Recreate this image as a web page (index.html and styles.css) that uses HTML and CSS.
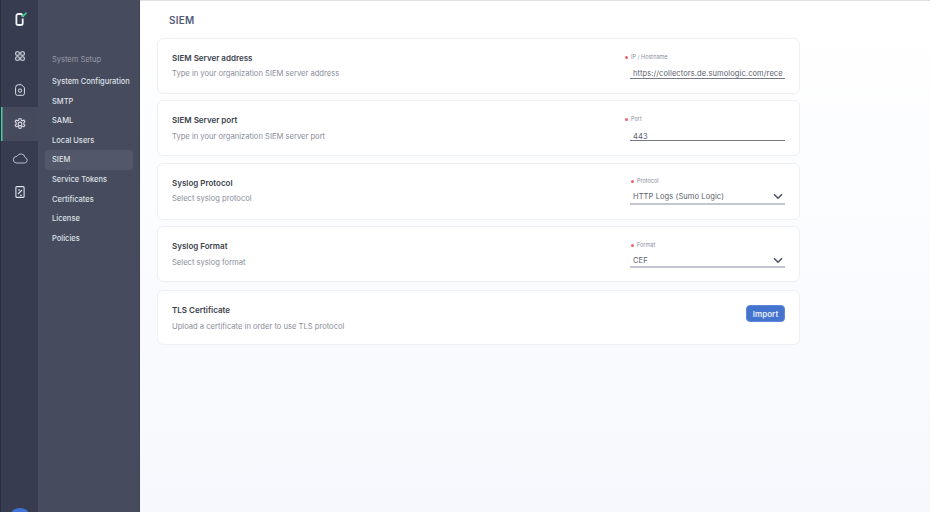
FILE: index.html
```html
<!DOCTYPE html>
<html lang="en">
<head>
<meta charset="utf-8">
<title>SIEM</title>
<link rel="stylesheet" href="styles.css">
</head>
<body>
<div class="app">
  <nav class="rail">
    <div class="rail-logo">
      <svg width="16" height="15" viewBox="0 0 16 15" fill="none"><path d="M10.700 4.800V3.800A1.800 1.800 0 0 0 8.900 2H6.200a1.800 1.800 0 0 0-1.800 1.800v7.400A1.800 1.800 0 0 0 6.200 13h2.700a1.800 1.800 0 0 0 1.800-1.800V6.500" stroke="#f2f3f6" stroke-width="1.800"/><path d="M9.900 2.800l1.400 1.400 3.200-3.600" stroke="#3fcf8e" stroke-width="1.600"/></svg>
    </div>
    <div class="rail-item">
      <svg width="10" height="10" viewBox="0 0 10 10" fill="none" stroke="#dfe1e8" stroke-width="1.100"><rect x=".7" y=".7" width="3.600" height="3.600" rx="1.400"/><rect x="5.700" y=".7" width="3.600" height="3.600" rx="1.400"/><rect x=".7" y="5.700" width="3.600" height="3.600" rx="1.400"/><rect x="5.700" y="5.700" width="3.600" height="3.600" rx="1.400"/></svg>
    </div>
    <div class="rail-item">
      <svg width="10" height="12" viewBox="0 0 10 12" fill="none" stroke="#dfe1e8" stroke-width="1"><path d="M3.500.7h2.900l3 3V9.500a1.800 1.800 0 0 1-1.800 1.800H2.400A1.800 1.800 0 0 1 .6 9.500V3.600A2.900 2.900 0 0 1 3.500.7z"/><circle cx="5" cy="6.600" r="1.700"/></svg>
    </div>
    <div class="rail-item rail-item-active">
      <svg width="12" height="12" viewBox="0 0 14 14" fill="none" stroke="#dfe1e8" stroke-width="1.200"><path d="M5.800 1h2.400l.4 1.700 1.400.6 1.500-.9 1.200 2-1.300 1.200v1.600l1.300 1.200-1.200 2-1.500-.9-1.400.6-.4 1.900H5.800l-.4-1.900-1.400-.6-1.500.9-1.200-2 1.300-1.200V5.600L1.300 4.400l1.200-2 1.500.9 1.400-.6z"/><circle cx="7" cy="7" r="2.200"/></svg>
    </div>
    <div class="rail-item">
      <svg width="16" height="11" viewBox="0 0 16 11" fill="none" stroke="#b9bcc9" stroke-width="1"><path d="M4 10h8.500a2.800 2.800 0 0 0 .6-5.500A4.300 4.300 0 0 0 5 3.300 3.400 3.400 0 0 0 4 10z"/></svg>
    </div>
    <div class="rail-item">
      <svg width="10" height="12" viewBox="0 0 10 12" fill="none" stroke="#e3e5eb" stroke-width="1.100"><rect x=".9" y=".6" width="8.200" height="10.800" rx="1"/><path d="M3 8l4-4M3 4h2M5 9.200h2"/></svg>
    </div>
    <div class="avatar"></div>
  </nav>
  <aside class="side">
    <div class="side-title">System Setup</div>
    <a class="side-link">System Configuration</a>
    <a class="side-link">SMTP</a>
    <a class="side-link">SAML</a>
    <a class="side-link">Local Users</a>
    <a class="side-link side-link-active">SIEM</a>
    <a class="side-link">Service Tokens</a>
    <a class="side-link">Certificates</a>
    <a class="side-link">License</a>
    <a class="side-link">Policies</a>
  </aside>
  <main class="main">
    <h1 class="page-title">SIEM</h1>
    <section class="card card-address">
      <div class="info"><h2>SIEM Server address</h2><p>Type in your organization SIEM server address</p></div>
      <div class="field">
        <div class="label"><i></i>IP / Hostname</div>
        <div class="value"><span>https://collectors.de.sumologic.com/rece</span></div>
      </div>
    </section>
    <section class="card card-port">
      <div class="info"><h2>SIEM Server port</h2><p>Type in your organization SIEM server port</p></div>
      <div class="field">
        <div class="label"><i></i>Port</div>
        <div class="value"><span>443</span></div>
      </div>
    </section>
    <section class="card card-protocol">
      <div class="info"><h2>Syslog Protocol</h2><p>Select syslog protocol</p></div>
      <div class="field">
        <div class="label label-select"><i></i>Protocol</div>
        <div class="value value-select"><span>HTTP Logs (Sumo Logic)</span><svg width="10" height="7" viewBox="0 0 10 7" fill="none" stroke="#4a4f60" stroke-width="1.500"><path d="M1 1.200l4 4 4-4"/></svg></div>
      </div>
    </section>
    <section class="card card-format">
      <div class="info"><h2>Syslog Format</h2><p>Select syslog format</p></div>
      <div class="field">
        <div class="label label-select"><i></i>Format</div>
        <div class="value value-select"><span>CEF</span><svg width="10" height="7" viewBox="0 0 10 7" fill="none" stroke="#4a4f60" stroke-width="1.500"><path d="M1 1.200l4 4 4-4"/></svg></div>
      </div>
    </section>
    <section class="card card-tls">
      <div class="info"><h2>TLS Certificate</h2><p>Upload a certificate in order to use TLS protocol</p></div>
      <button class="import">Import</button>
    </section>
  </main>
</div>
</body>
</html>
```
FILE: styles.css
```css
* { box-sizing: border-box; }
html, body { margin: 0; height: 100%; }
body { font-family: Inter, "Liberation Sans", sans-serif; background: #fff; overflow: hidden; }
.app { display: flex; width: 930px; height: 512px; }

.rail {
  width: 38px; flex: none; display: flex; flex-direction: column; align-items: stretch;
  background: #383c51; border-left: 1px solid #2b2e3d; overflow: hidden;
}
.rail-logo { height: 39px; display: flex; align-items: center; justify-content: center; }
.rail-item { height: 34px; display: flex; align-items: center; justify-content: center; }
.rail-item-active { background: #454a5d; box-shadow: inset 1.500px 0 0 #4fc8a0; }
.avatar {
  width: 22px; height: 22px; border-radius: 50%; background: #3f74d6;
  margin: auto auto -18px;
}

.side {
  width: 102px; flex: none; display: flex; flex-direction: column; padding: 50px 6px 0 7px;
  background: #464b5e; border-right: 1px solid #3f4354;
}
.side-title { font-size: 7.500px; line-height: 20px; color: #9a9dab; padding-left: 7px; margin-bottom: 2px; }
.side-link {
  height: 19.600px; line-height: 19.600px; padding-left: 7px; font-size: 7.500px; font-weight: 500;
  color: #dfe0e6; border-radius: 4px; white-space: nowrap;
}
.side-link-active { background: #525769; }

.main {
  flex: 1; padding: 0 0 0 17px; border-top: 1px solid #dfe0e3;
  background: linear-gradient(180deg, #fff 0%, #f6f8fd 100%);
}
.page-title { margin: 0; padding: 12px 0 0 12px; height: 37px; font-size: 10px; line-height: 14px; font-weight: 600; color: #555b78; letter-spacing: .2px; }

.card {
  width: 643px; height: 56px; display: flex; align-items: flex-start; justify-content: space-between;
  background: #fff; border: 1px solid #eef0f6; border-radius: 6px;
  padding: 0 14px;
}
.card-address { margin-bottom: 6px; }
.card-port { margin-bottom: 7px; }
.card-protocol { height: 57px; margin-bottom: 6px; }
.card-format { margin-bottom: 8px; }
.card-tls { height: 55px; }
.info { padding-top: 13px; }
.info h2 { margin: 0; font-size: 8px; line-height: 12px; font-weight: 600; color: #3b3f4c; }
.info p { margin: 3.500px 0 0; font-size: 7.600px; line-height: 12px; color: #8a8d99; }
.card-tls p, .card-port p, .card-format p { margin-top: 4.500px; }

.field { width: 155px; padding-top: 14px; }
.label { display: flex; align-items: center; height: 8px; font-size: 5.500px; color: #8b8e9a; }
.label i { flex: none; width: 3px; height: 3px; border-radius: 50%; background: #ee5f6e; margin: 0 3px 0 -5px; }
.label-select { margin: -1px 0 0 6px; }
.card-format .label { margin-top: 0; }
.card-port .value { padding-top: 9px; }
.value {
  height: 18px; display: flex; align-items: center; justify-content: space-between;
  padding: 7px 3px 0 3px; font-size: 7.500px; color: #5a5e6c; border-bottom: 1px solid #77798a; letter-spacing: .1px;
  white-space: nowrap;
}
.value-select { height: 20px; padding-top: 5px; border-bottom: 2px solid #c3c5d3; padding-right: 2px; }
.card-format .value { height: 19px; }
.value-select svg { flex: none; }

.import {
  margin-top: 14px; width: 39px; height: 17px; padding: 0; border: 1px solid #5f88dc; border-radius: 4px;
  background: #4574cf; color: #e8eefb; font: 600 8px Inter, "Liberation Sans", sans-serif;
}
```
